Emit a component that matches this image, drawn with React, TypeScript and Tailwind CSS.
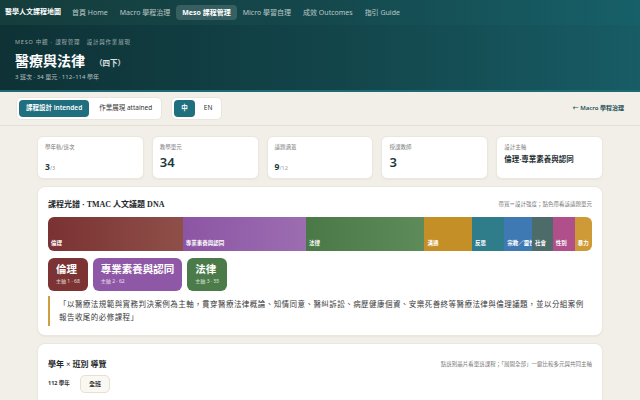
const sans = "font-['Noto_Sans','Noto_Sans_CJK_TC',sans-serif]";
const serif = "font-['Liberation_Serif','Noto_Sans_CJK_TC',serif]";

const navItems = [
  { label: "首頁 Home" },
  { label: "Macro 學程治理" },
  { label: "Meso 課程管理", active: true },
  { label: "Micro 學習自理" },
  { label: "成效 Outcomes" },
  { label: "指引 Guide" },
];

const segments = [
  { label: "倫理", w: 139, cls: "bg-linear-to-r from-[#7a3232] to-[#8f4f49]" },
  { label: "專業素養與認同", w: 127, cls: "bg-linear-to-r from-[#8c55a4] to-[#9c6db1]" },
  { label: "法律", w: 122, cls: "bg-linear-to-r from-[#4a7947] to-[#5e8b5a]" },
  { label: "溝通", w: 47, cls: "bg-[#c58f27]" },
  { label: "反思", w: 31, cls: "bg-[#2f7d8b]" },
  { label: "宗教／靈性", w: 26, cls: "bg-[#3f79b4]" },
  { label: "社會", w: 19, cls: "bg-[#4d6b69]" },
  { label: "性別", w: 20, cls: "bg-[#b04f8a]" },
  { label: "暴力", w: 15, cls: "bg-[#cd9a37]" },
];

const pills = [
  { title: "倫理", sub: "主軸 1 · 68", cls: "bg-[#7b3333]" },
  { title: "專業素養與認同", sub: "主軸 2 · 62", cls: "bg-[#8e58a6]" },
  { title: "法律", sub: "主軸 3 · 55", cls: "bg-[#4b7b49]" },
];

const StatCard = ({ label, children }: { label: string; children: React.ReactNode }) => (
  <div className="flex-1 h-[43px] bg-white rounded-[6px] border border-[#ece7dd] shadow-[0_1px_2px_rgba(0,0,0,0.04)] px-[7px] pt-[8px]">
    <div className="text-[5.5px] text-[#7a7a7a] leading-none">{label}</div>
    {children}
  </div>
);

export default function App() {
  return (
    <div className={`min-h-[560px] bg-[#f2efe8] ${sans}`}>
      {/* top nav */}
      <nav className="h-[25px] flex items-center pl-[5px] bg-linear-to-r from-[#153d3c] via-[#14484c] to-[#176069]">
        <span className={`text-[7px] font-bold text-white mr-[5px] ${serif}`}>醫學人文課程地圖</span>
        {navItems.map((n) => (
          <span
            key={n.label}
            className={
              n.active
                ? "px-[6px] py-[4px] rounded-[4px] bg-white/15 text-[7px] font-bold text-white leading-none"
                : "px-[6px] py-[4px] text-[7px] text-white/70 leading-none"
            }
          >
            {n.label}
          </span>
        ))}
      </nav>

      {/* header */}
      <header className="h-[67px] px-[15px] pt-[15px] bg-linear-to-r from-[#0e3236] via-[#124449] to-[#185c65] border-b-[2px] border-[#1d6a72]">
        <div className="text-[5.5px] tracking-[0.8px] text-white/60 leading-none">
          MESO 中觀 · 課程管理　設計與作業展現
        </div>
        <div className="flex items-baseline gap-[10px] mt-[7px]">
          <h1 className={`text-[14px] font-bold text-white leading-[18px] ${serif}`}>醫療與法律</h1>
          <span className={`text-[7.5px] font-bold text-white/85 ${serif}`}>（四下）</span>
        </div>
        <div className="text-[6px] text-white/70 mt-[3px] leading-none">3 班次 · 34 單元 · 112–114 學年</div>
      </header>

      {/* toggles */}
      <div className="flex items-center px-[16px] pt-[5px] pb-[5px] border-b border-[#e6e1d6]">
        <div className="flex items-center gap-[3px] p-[2px] bg-white rounded-[5px] border border-[#ebe6dc]">
          <span className="px-[7px] py-[5px] rounded-[4px] bg-[#1f6f7f] text-white text-[6.5px] font-semibold leading-none">
            課程設計 intended
          </span>
          <span className="px-[7px] py-[5px] text-[6.5px] text-[#333] leading-none">作業展現 attained</span>
        </div>
        <div className="flex items-center gap-[2px] p-[2px] ml-[9px] bg-white rounded-[5px] border border-[#ebe6dc]">
          <span className="px-[7px] py-[5px] rounded-[4px] bg-[#1f6f7f] text-white text-[6.5px] font-semibold leading-none">
            中
          </span>
          <span className="px-[7px] py-[5px] text-[6.5px] text-[#333] leading-none">EN</span>
        </div>
        <span className="ml-auto text-[6px] text-[#1d4f57] font-semibold">← Macro 學程治理</span>
      </div>

      <main className="w-[566px] mx-auto pt-[10px] flex flex-col gap-[7px]">
        {/* stats */}
        <div className="flex gap-[8px]">
          <StatCard label="學年軌/班次">
            <div className="mt-[6px] leading-none text-[#1c3a3e]">
              <span className="text-[8.5px] font-bold">3</span>
              <span className="text-[5.5px] text-[#999]">/3</span>
            </div>
          </StatCard>
          <StatCard label="教學單元">
            <div className="mt-[6px] text-[13px] font-semibold leading-none text-[#1c3a3e]">34</div>
          </StatCard>
          <StatCard label="議題涵蓋">
            <div className="mt-[6px] leading-none text-[#1c3a3e]">
              <span className="text-[8.5px] font-bold">9</span>
              <span className="text-[5.5px] text-[#999]">/12</span>
            </div>
          </StatCard>
          <StatCard label="授課教師">
            <div className="mt-[6px] text-[13px] font-semibold leading-none text-[#1c3a3e]">3</div>
          </StatCard>
          <StatCard label="設計主軸">
            <div className="mt-[6px] text-[7.5px] font-bold leading-none text-[#1f2f33]">倫理·專業素養與認同</div>
          </StatCard>
        </div>

        {/* spectrum */}
        <section className="bg-white rounded-[8px] border border-[#ece7dd] shadow-[0_1px_2px_rgba(0,0,0,0.04)] px-[10px] pt-[14px] pb-[9px]">
          <div className="flex items-center justify-between">
            <h2 className={`text-[8px] font-bold text-[#1f2a2c] leading-none ${serif}`}>課程光譜 · TMAC 人文議題 DNA</h2>
            <span className="text-[5.5px] text-[#777] leading-none">帶寬＝設計強度；點色帶看該議題單元</span>
          </div>
          <div className="flex h-[34px] mt-[8px] rounded-[6px] overflow-hidden">
            {segments.map((s) => (
              <div
                key={s.label}
                className={`basis-0 min-w-0 flex items-end pl-[3px] pb-[4px] overflow-hidden ${s.cls}`}
                style={{ flexGrow: s.w }}
              >
                <span className="text-[5.5px] font-semibold text-white whitespace-nowrap leading-none">{s.label}</span>
              </div>
            ))}
          </div>
          <div className="flex gap-[5px] mt-[7px]">
            {pills.map((p) => (
              <div key={p.title} className={`h-[33px] rounded-[6px] px-[8px] pt-[5px] ${p.cls}`}>
                <div className={`text-[10.5px] font-bold text-white leading-[13px] ${serif}`}>{p.title}</div>
                <div className="text-[5px] text-white/80 mt-[3px] leading-none">{p.sub}</div>
              </div>
            ))}
          </div>
          <blockquote
            className={`mt-[5px] border-l-[2px] border-[#d0a040] pl-[9px] pr-[6px] py-[2px] text-[7.5px] tracking-[0.45px] leading-[13px] text-[#3a3a3a] ${serif}`}
          >
            「以醫療法規範與實務判決案例為主軸，貫穿醫療法律概論、知情同意、醫糾訴訟、病歷健康個資、安樂死善終等醫療法律與倫理議題，並以分組案例報告收尾的必修課程」
          </blockquote>
        </section>

        {/* year x class */}
        <section className="bg-white rounded-[8px] border border-[#ece7dd] shadow-[0_1px_2px_rgba(0,0,0,0.04)] px-[10px] pt-[17px] min-h-[120px]">
          <div className="flex items-center justify-between">
            <h2 className={`text-[8px] font-bold text-[#1f2a2c] leading-none ${serif}`}>學年 × 班別 導覽</h2>
            <span className="text-[5.5px] text-[#777] leading-none">點班別晶片看單班課程；「展開全部」一鍵比較多元與共同主軸</span>
          </div>
          <div className="flex items-center gap-[10px] mt-[6px]">
            <span className="text-[5.5px] font-bold text-[#333]">112 學年</span>
            <span className="px-[8px] py-[5px] rounded-[5px] border border-[#e6e0d3] bg-[#faf8f3] text-[6px] font-semibold text-[#333] leading-none">
              全班
            </span>
          </div>
        </section>
      </main>
    </div>
  );
}
